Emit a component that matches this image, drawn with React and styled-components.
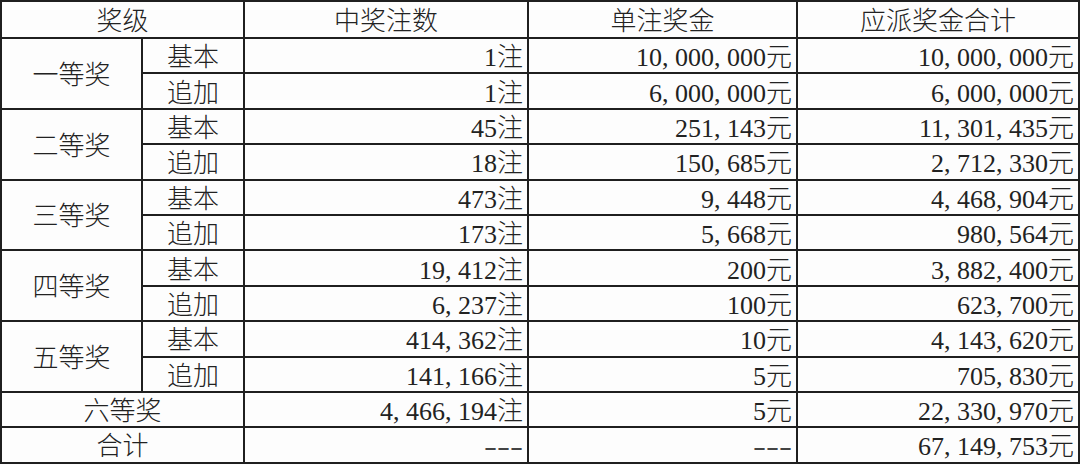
import React from 'react';
import styled, { createGlobalStyle } from 'styled-components';

const GlobalStyle = createGlobalStyle`
  html, body {
    margin: 0;
    padding: 0;
    background: #fdfdfd;
  }
  body {
    font-family: "Liberation Serif", "Noto Sans CJK SC", serif;
    font-weight: 300;
    color: #222;
  }
`;

const PrizeTable = styled.table`
  width: 1078px;
  table-layout: fixed;
  border-collapse: collapse;
  border: 2px solid #1a1a1a;
`;

const HeadRow = styled.tr`
  height: 37px;
`;

const Row = styled.tr`
  height: 35.4px;
`;

const Cell = styled.td`
  border: 2px solid #1f1f1f;
  padding: 5px 4px 0 4px;
  font-size: 26px;
  line-height: 1;
  white-space: nowrap;
  text-align: ${props => props.$align || 'center'};
  vertical-align: middle;
  overflow: hidden;
`;

const Comma = styled.span`
  display: inline-block;
  width: 0.5em;
  text-align: left;
`;

const Dash = styled.span`
  display: inline-block;
  transform: scaleX(1.5);
  transform-origin: right center;
  color: #444;
`;

const widths = [141, 102, 284, 269, 282];

const tiers = [
  {
    name: '一等奖',
    rows: [
      ['基本', '1注', '10,000,000元', '10,000,000元'],
      ['追加', '1注', '6,000,000元', '6,000,000元'],
    ],
  },
  {
    name: '二等奖',
    rows: [
      ['基本', '45注', '251,143元', '11,301,435元'],
      ['追加', '18注', '150,685元', '2,712,330元'],
    ],
  },
  {
    name: '三等奖',
    rows: [
      ['基本', '473注', '9,448元', '4,468,904元'],
      ['追加', '173注', '5,668元', '980,564元'],
    ],
  },
  {
    name: '四等奖',
    rows: [
      ['基本', '19,412注', '200元', '3,882,400元'],
      ['追加', '6,237注', '100元', '623,700元'],
    ],
  },
  {
    name: '五等奖',
    rows: [
      ['基本', '414,362注', '10元', '4,143,620元'],
      ['追加', '141,166注', '5元', '705,830元'],
    ],
  },
];

// SimSun style: every comma takes a half-width cell
const Amount = ({ value }) => {
  if (value === '---') return <Dash>---</Dash>;
  const parts = value.split(',');
  return parts.map((p, i) => (
    <React.Fragment key={i}>
      {i > 0 && <Comma>,</Comma>}
      {p}
    </React.Fragment>
  ));
};

const App = () => (
  <>
    <GlobalStyle />
    <PrizeTable>
      <colgroup>
        {widths.map((w, i) => <col key={i} style={{ width: w }} />)}
      </colgroup>
      <tbody>
        <HeadRow>
          <Cell colSpan={2}>奖级</Cell>
          <Cell>中奖注数</Cell>
          <Cell>单注奖金</Cell>
          <Cell>应派奖金合计</Cell>
        </HeadRow>
        {tiers.map(tier =>
          tier.rows.map((r, i) => (
            <Row key={tier.name + i}>
              {i === 0 && <Cell rowSpan={2}>{tier.name}</Cell>}
              <Cell>{r[0]}</Cell>
              <Cell $align="right"><Amount value={r[1]} /></Cell>
              <Cell $align="right"><Amount value={r[2]} /></Cell>
              <Cell $align="right"><Amount value={r[3]} /></Cell>
            </Row>
          )),
        )}
        <Row>
          <Cell colSpan={2}>六等奖</Cell>
          <Cell $align="right"><Amount value="4,466,194注" /></Cell>
          <Cell $align="right"><Amount value="5元" /></Cell>
          <Cell $align="right"><Amount value="22,330,970元" /></Cell>
        </Row>
        <Row>
          <Cell colSpan={2}>合计</Cell>
          <Cell $align="right"><Amount value="---" /></Cell>
          <Cell $align="right"><Amount value="---" /></Cell>
          <Cell $align="right"><Amount value="67,149,753元" /></Cell>
        </Row>
      </tbody>
    </PrizeTable>
  </>
);

export default App;
